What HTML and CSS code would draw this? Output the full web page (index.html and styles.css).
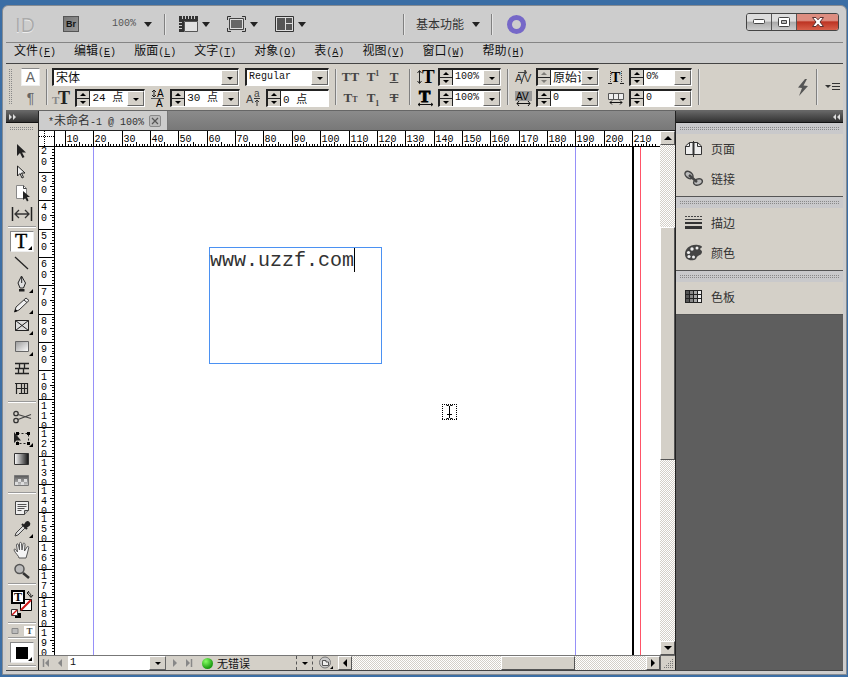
FILE: index.html
```html
<!DOCTYPE html>
<html lang="zh-CN">
<head>
  <meta charset="UTF-8" />
  <meta name="viewport" content="width=device-width, initial-scale=1.0" />
  <title>未命名-1</title>
  <link rel="stylesheet" href="styles.css">
</head>
<body>

<div class="window">

  <header class="titlebar">
    <span class="logo">ID</span>
    <button class="bridge" aria-label="Bridge">Br</button>
    <button class="drop zoom-level latin">100% <i class="caret"></i></button>
    <span class="divider"></span>
    <button class="drop" aria-label="视图选项">
      <svg width="19" height="16" viewBox="0 0 19 16"><path d="M0 0h19v5H5v11H0z" fill="#333"/><path d="M5.500 5.500h13v10h-13z" fill="#e2e2e2" stroke="#555"/><path d="M3.500 0v3M6.500 0v3M9.500 0v3M12.500 0v3M15.500 0v3M0 6.500h3M0 9.500h3M0 12.500h3" stroke="#ccc"/></svg>
      <i class="caret"></i>
    </button>
    <button class="drop" aria-label="屏幕模式">
      <svg width="19" height="16" viewBox="0 0 19 16"><path d="M.5 4V.5H4M15 .5h3.500V4M18.500 12v3.500H15M4 15.500H.5V12" fill="none" stroke="#333"/><path d="M2.500 2.500h14v11h-14z" fill="#ddd" stroke="#444"/><path d="M4 4h11v8H4z" fill="#666"/></svg>
      <i class="caret"></i>
    </button>
    <button class="drop" aria-label="排列文档">
      <svg width="19" height="16" viewBox="0 0 19 16"><path d="M.5.5h18v15H.5z" fill="#ddd" stroke="#333"/><path d="M2 2h8v12H2zM11 2h6v5h-6zM11 8h6v6h-6z" fill="#555"/></svg>
      <i class="caret"></i>
    </button>
    <div class="workspace">
      <span class="divider"></span>
      <button class="drop">基本功能 <i class="caret"></i></button>
      <span class="divider"></span>
      <button class="ring" aria-label="CS Live"></button>
    </div>
    <div class="win-buttons">
      <button aria-label="最小化"><svg width="12" height="6" viewBox="0 0 12 6"><rect x=".5" y=".5" width="11" height="4" rx="1" fill="#fff" stroke="#444"/></svg></button>
      <button aria-label="最大化"><svg width="12" height="10" viewBox="0 0 12 10"><rect x=".5" y=".5" width="11" height="9" rx="1" fill="#fff" stroke="#444"/><path d="M3.500 3.500h5v3h-5z" fill="#bbb" stroke="#444"/></svg></button>
      <button class="close" aria-label="关闭"><svg width="12" height="10" viewBox="0 0 12 10"><path d="M.5.500h3.500L6 2.800 8 .5h3.500L8 5l3.500 4.500H8L6 7.200 4 9.500H.5L4 5z" fill="#fff" stroke="#5a3030"/></svg></button>
    </div>
  </header>

  <nav class="menu">
    <button>文件<span class="latin">(<u>F</u>)</span></button>
    <button>编辑<span class="latin">(<u>E</u>)</span></button>
    <button>版面<span class="latin">(<u>L</u>)</span></button>
    <button>文字<span class="latin">(<u>T</u>)</span></button>
    <button>对象<span class="latin">(<u>O</u>)</span></button>
    <button>表<span class="latin">(<u>A</u>)</span></button>
    <button>视图<span class="latin">(<u>V</u>)</span></button>
    <button>窗口<span class="latin">(<u>W</u>)</span></button>
    <button>帮助<span class="latin">(<u>H</u>)</span></button>
  </nav>

  <section class="control">
    <span class="grip-v"></span>
    <div class="rows modes">
      <button class="on" aria-label="字符格式">A</button>
      <button aria-label="段落格式">¶</button>
    </div>
    <span class="divider"></span>

    <div class="rows type">
      <div class="row names">
        <label class="combo grow cjk"><select aria-label="字体"><option>宋体</option></select></label>
        <label class="combo style"><select aria-label="字体样式"><option>Regular</option></select></label>
      </div>
      <div class="row">
        <svg class="field-icon" width="18" height="16" viewBox="0 0 18 16"><text x="0" y="14" font-size="11" class="serif" fill="#888">T</text><text x="6" y="14" font-size="18" class="serif" fill="#222">T</text></svg>
        <div class="combo size"><span class="spin"><button aria-label="增大"></button><button aria-label="减小"></button></span><select aria-label="字号"><option>24 点</option></select></div>
        <svg class="field-icon" width="14" height="18" viewBox="0 0 14 18"><path d="M3 1v7M1 3l2-2 2 2M1 6l2 2 2-2" fill="none" stroke="#222"/><text x="6" y="8" font-size="10" class="sans">A</text><text x="5" y="18" font-size="10" class="sans">A</text><path d="M0 9.500h13" stroke="#555"/></svg>
        <div class="combo leading"><span class="spin"><button aria-label="增大"></button><button aria-label="减小"></button></span><select aria-label="行距"><option>30 点</option></select></div>
        <svg class="field-icon" width="15" height="16" viewBox="0 0 15 16"><text x="0" y="13" font-size="11" class="sans" fill="#444">A</text><text x="8" y="7" font-size="10" class="sans" fill="#444">a</text><path d="M8 8.500h6M11 16v-5M9 12l2-2 2 2" fill="none" stroke="#333"/></svg>
        <div class="combo plain shift"><span class="spin"><button aria-label="增大"></button><button aria-label="减小"></button></span><input aria-label="基线偏移" value="0 点"></div>
      </div>
    </div>
    <span class="divider"></span>

    <div class="glyphs">
      <button aria-label="全部大写">TT</button>
      <button aria-label="上标">T<sup>1</sup></button>
      <button aria-label="下划线"><u>T</u></button>
      <button aria-label="小型大写">T<small>T</small></button>
      <button aria-label="下标">T<sub>1</sub></button>
      <button aria-label="删除线"><s>T</s></button>
    </div>
    <span class="divider"></span>

    <div class="rows">
      <div class="row">
        <svg class="field-icon" width="18" height="16" viewBox="0 0 18 16"><path d="M2.500 2v12M.5 4l2-2.500 2 2.500M.5 12l2 2.500 2-2.500" fill="none" stroke="#222"/><text x="5" y="14" font-size="19" class="serif">T</text></svg>
        <div class="combo scale"><span class="spin"><button aria-label="增大"></button><button aria-label="减小"></button></span><select aria-label="垂直缩放"><option>100%</option></select></div>
      </div>
      <div class="row">
        <svg class="field-icon" width="18" height="16" viewBox="0 0 18 16"><text x="2" y="12" font-size="17" class="serif" stroke="#000">T</text><path d="M1 14.500h15M3 13l-2 1.500L3 16M14 13l2 1.500-2 1.500" fill="none" stroke="#111"/></svg>
        <div class="combo scale"><span class="spin"><button aria-label="增大"></button><button aria-label="减小"></button></span><select aria-label="水平缩放"><option>100%</option></select></div>
      </div>
    </div>
    <span class="divider"></span>

    <div class="rows">
      <div class="row">
        <svg class="field-icon" width="18" height="16" viewBox="0 0 18 16"><text x="0" y="13" font-size="11" class="sans" fill="#333">A</text><text x="9" y="13" font-size="11" class="sans" fill="#333">V</text><path d="M10.500 1L6 15M3 3.500h8M9 1.500l3 2-3 2" fill="none" stroke="#444"/></svg>
        <div class="combo scale cjk dim"><span class="spin"><button aria-label="增大"></button><button aria-label="减小"></button></span><select aria-label="字偶间距"><option>原始设定</option></select></div>
      </div>
      <div class="row">
        <svg class="field-icon" width="18" height="16" viewBox="0 0 18 16"><path d="M0 1h17v10H0z" fill="#999"/><text x="1" y="10" font-size="10" class="sans">AV</text><path d="M2 13.500h13M4 11l-2 2.500L4 16M13 11l2 2.500-2 2.500" fill="none" stroke="#111"/></svg>
        <div class="combo scale"><span class="spin"><button aria-label="增大"></button><button aria-label="减小"></button></span><select aria-label="字符间距"><option>0</option></select></div>
      </div>
    </div>

    <div class="rows grid-fields">
      <div class="row">
        <svg class="field-icon" width="18" height="16" viewBox="0 0 18 16"><path d="M2.500 2v11M13.500 2v11" stroke="#444" stroke-dasharray="1 1"/><text x="3" y="13" font-size="14" class="serif">T</text><path d="M0 14.500h4M12 14.500h4" stroke="#222"/></svg>
        <div class="combo scale"><span class="spin"><button aria-label="增大"></button><button aria-label="减小"></button></span><select aria-label="比例间距"><option>0%</option></select></div>
      </div>
      <div class="row">
        <svg class="field-icon" width="18" height="16" viewBox="0 0 18 16"><path d="M.5 3.500h15v6H.5zM5.500 3v7M10.500 3v7" fill="#eee" stroke="#555"/><path d="M2 12.500h12M4 10.500l-2 2 2 2M12 10.500l2 2-2 2" fill="none" stroke="#111"/></svg>
        <div class="combo scale"><span class="spin"><button aria-label="增大"></button><button aria-label="减小"></button></span><select aria-label="网格指定格数"><option>0</option></select></div>
      </div>
    </div>
    <span class="divider"></span>

    <div class="control-end">
      <button aria-label="快速应用"><svg width="12" height="17" viewBox="0 0 12 17"><path d="M8 0L1 8.500l4 .5-3 8 9-10-4.500-.5L10 0z" fill="#555"/></svg></button>
      <span class="divider"></span>
      <button aria-label="面板菜单"><svg width="15" height="10" viewBox="0 0 15 10"><path d="M0 3h6L3 6z" fill="#333"/><path d="M7 1.500h8M7 4.500h8M7 7.500h8" stroke="#333"/></svg></button>
    </div>
  </section>

  <main class="work">

    <aside class="tools">
      <div class="dock-head"><svg width="8" height="6" viewBox="0 0 8 6"><path d="M0 0l3 3-3 3zM4 0l3 3-3 3z" fill="#ddd"/></svg></div>
      <span class="grip-h"></span>

      <div class="tool-group">
        <button aria-label="选择"><svg viewBox="0 0 20 20"><path d="M5 3v12l3-3 2.500 5 2-1-2.500-4.500h4z" fill="#222"/></svg></button>
        <button aria-label="直接选择"><svg viewBox="0 0 20 20"><path d="M5.500 4v10l2.500-2.500 2 4.500 1.500-.7-2-4.300H13z" fill="#eee" stroke="#222"/></svg></button>
        <button aria-label="页面"><svg viewBox="0 0 20 20"><path d="M4.500 2.500h7l3 3v10h-10z" fill="#fff" stroke="#888"/><path d="M11.500 2.500v3h3" fill="none" stroke="#444"/><path d="M11 8v9l2.200-2 1.800 3.500 1.500-1L15 14h3z" fill="#222"/></svg></button>
        <button aria-label="间隙"><svg viewBox="0 0 20 20"><path d="M.5 3v14M19.500 3v14" stroke="#222" stroke-width="1.500"/><path d="M3 10h14M7 6l-4 4 4 4M13 6l4 4-4 4" fill="none" stroke="#333" stroke-width="1.300"/></svg></button>
      </div>
      <div class="tool-group">
        <button class="active more" aria-label="文字"><svg viewBox="0 0 20 20"><text x="3" y="16" font-size="20" class="serif light">T</text></svg></button>
        <button aria-label="直线"><svg viewBox="0 0 20 20"><path d="M3 4l13 12" stroke="#222" stroke-width="1.300"/></svg></button>
        <button class="more" aria-label="钢笔"><svg viewBox="0 0 20 20"><path d="M9.500 2L6 9l2 5h3.500l2-5z" fill="#ddd" stroke="#222"/><path d="M9.700 3v6" stroke="#222"/><path d="M7 15h5.500v2.500H7z" fill="#222"/></svg></button>
        <button class="more" aria-label="铅笔"><svg viewBox="0 0 20 20"><path d="M2.500 17l1.500-5L14 3l3 2.500L7 15z" fill="#eee" stroke="#333"/><path d="M2.500 17l1-3 2 2z"/><path d="M12 5l3 2.500" stroke="#333"/></svg></button>
        <button class="more" aria-label="矩形框架"><svg viewBox="0 0 20 20"><path d="M3.500 4.500h13v10h-13zM3.500 4.500l13 10M16.500 4.500l-13 10" fill="#ddd" stroke="#222"/></svg></button>
        <button class="more" aria-label="矩形"><svg viewBox="0 0 20 20"><path d="M3.500 4.500h13v10h-13z" fill="url(#silver)" stroke="#666"/></svg></button>
        <button aria-label="水平网格"><svg viewBox="0 0 20 20"><path d="M3 5.500h14M3 10.500h14M3 15.500h14M7.500 5v5M12.500 5v5M6.500 10v5M11.500 10v5" stroke="#222" stroke-width="1.300"/></svg></button>
        <button aria-label="垂直网格"><svg viewBox="0 0 20 20"><path d="M4.500 4v11M9.500 4v11M15.500 4v11M3 4.500h13M4 9.500h12M7 14.500h9M12.500 4v11" stroke="#222" stroke-width="1.200"/></svg></button>
      </div>
      <div class="tool-group">
        <button aria-label="剪刀"><svg viewBox="0 0 20 20"><circle cx="4" cy="6.500" r="2.200" fill="none" stroke="#333" stroke-width="1.300"/><circle cx="4" cy="13.500" r="2.200" fill="none" stroke="#333" stroke-width="1.300"/><path d="M6 7.500l13 4M6 12.500l13-5" stroke="#444" stroke-width="1.300"/></svg></button>
        <button class="more" aria-label="自由变换"><svg viewBox="0 0 20 20"><path d="M5.500 5.500h11v10h-11z" fill="none" stroke="#222" stroke-dasharray="2 2"/><path d="M4 4h3v3H4zM15 4h3v3h-3zM15 14h3v3h-3zM4 14h3v3H4z"/><path d="M2 4v11l2.500-2.500H9z" fill="#222"/></svg></button>
        <button aria-label="渐变色板"><svg viewBox="0 0 20 20"><path d="M2.500 4.500h14v11h-14z" fill="url(#fade)" stroke="#333"/></svg></button>
        <button aria-label="渐变羽化"><svg viewBox="0 0 20 20"><path d="M2.500 5.500h14v10h-14z" fill="url(#dusk)" stroke="#777"/><path d="M3 12h3v3H3zM9 12h3v3H9zM6 9h3v3H6zM12 9h3v3h-3z" fill="#ddd"/></svg></button>
      </div>
      <div class="tool-group">
        <button aria-label="附注"><svg viewBox="0 0 20 20"><path d="M3.500 3.500h13v9l-4 4h-9z" fill="#eee" stroke="#444"/><path d="M5.500 6.500h9M5.500 8.500h9M5.500 10.500h7M5.500 12.500h4" stroke="#555"/><path d="M16.500 12.500h-4v4" fill="#bbb" stroke="#444"/></svg></button>
        <button class="more" aria-label="吸管"><svg viewBox="0 0 20 20"><path d="M11 7l-7 7-1 3 3-1 7-7" fill="#ddd" stroke="#444"/><path d="M10 5l5 5M12 7l2.500-3.500a1.800 1.800 0 0 1 2.500 2.500L13.500 8.500z" stroke="#222" stroke-width="2" fill="#222"/></svg></button>
        <button aria-label="抓手"><svg viewBox="0 0 20 20"><path d="M7 18c0-2-4-5-5-8 0-1.500 1.500-1 2 0l1.500 2L4.500 5c0-1.500 1.700-1.500 2 0l1 5V3.500c0-1.500 2-1.500 2 0L10 10l1-6c.3-1.500 2-1 2 .5L12.500 11 15 7c1-1.200 2-.3 1.700.8C16 11 15 15 14 18z" fill="#f4f4f4" stroke="#555"/></svg></button>
        <button aria-label="缩放"><svg viewBox="0 0 20 20"><circle cx="7.500" cy="8" r="4.500" fill="#bbb" stroke="#555" stroke-width="1.500"/><path d="M11 12l6 5" stroke="#333" stroke-width="2.500"/></svg></button>
      </div>
      <div class="tool-group">
        <button class="swatch-pair" aria-label="填色与描边"><svg viewBox="0 0 28 32"><path d="M12.500 11.500h11v11h-11z" fill="#fff" stroke="#000"/><path d="M13 22l10-10" stroke="#d01818" stroke-width="2"/><path d="M4 3h12v12H4z" fill="#fff" stroke="#000" stroke-width="2"/><text x="6" y="13" font-size="12" class="serif">T</text><path d="M19 5c3-1 4 1 4 4M21 7l2 2.500L25 7M21 3l-2 2 2 2" fill="none" stroke="#222"/><path d="M7 25h6v5H7z"/><path d="M3.500 21.500h6v6h-6z" fill="#fff" stroke="#333"/><path d="M4 27l5-5" stroke="#d01818" stroke-width="1.500"/></svg></button>
      </div>
      <div class="tool-group apply">
        <button aria-label="应用于容器"><svg viewBox="0 0 10 10"><path d="M1.500 2.500h6v5h-6z" fill="#bbb" stroke="#888"/></svg></button>
        <button class="on" aria-label="应用于文本"><svg viewBox="0 0 10 10"><text x="2" y="8" font-size="9" class="serif" fill="#444">T</text></svg></button>
      </div>
      <div class="tool-group last">
        <button class="active more" aria-label="应用颜色"><svg viewBox="0 0 20 20"><path d="M4 4h12v12H4z"/></svg></button>
      </div>
    </aside>

    <section class="document">
      <div class="tabs">
        <div class="tab">
          <span><span class="latin">*</span>未命名<span class="latin">-1 @ 100%</span></span>
          <button aria-label="关闭文档"><svg width="8" height="8" viewBox="0 0 8 8"><path d="M1 1l6 6M7 1L1 7" stroke="#555" stroke-width="1.200"/></svg></button>
        </div>
      </div>

      <div class="viewer">
        <div class="ruler-corner"></div>
        <div class="ruler ruler-h"><svg id="ruler-h"></svg></div>
        <div class="scroll scroll-v">
          <button aria-label="向上滚动"><i class="arrow up"></i></button>
          <span class="space-a"></span><span class="thumb"></span><span class="space-b"></span>
          <button aria-label="向下滚动"><i class="arrow down"></i></button>
        </div>
        <div class="ruler ruler-v"><svg id="ruler-v"></svg></div>

        <div class="canvas">
          <span class="guide left"></span>
          <span class="guide right"></span>
          <span class="page-edge"></span>
          <span class="bleed"></span>
          <div class="text-frame">www.uzzf.com<span class="text-caret"></span></div>
          <svg class="pointer" width="16" height="17" viewBox="0 0 16 17"><path d="M.5 0v16M14.500 0v16M0 .5h15M0 15.500h15" fill="none" stroke="#000" stroke-dasharray="1 1"/><path d="M4.500 1.500h2l1 1 1-1h2M7.500 2v12M4.500 14.500h2l1-1 1 1h2M5 10.500h5" fill="none" stroke="#000"/></svg>
        </div>

        <div class="status">
          <button aria-label="第一页"><svg width="8" height="8" viewBox="0 0 8 8"><path d="M1.500 0v8" stroke="#888" stroke-width="1.500"/><path d="M7 0v8L3 4z" fill="#888"/></svg></button>
          <button aria-label="上一页"><svg width="8" height="8" viewBox="0 0 8 8"><path d="M6 0v8L2 4z" fill="#888"/></svg></button>
          <label class="combo page"><select aria-label="页码"><option>1</option></select></label>
          <button aria-label="下一页"><svg width="8" height="8" viewBox="0 0 8 8"><path d="M2 0v8l4-4z" fill="#888"/></svg></button>
          <button aria-label="最后一页"><svg width="8" height="8" viewBox="0 0 8 8"><path d="M1 0v8l4-4z" fill="#888"/><path d="M6.500 0v8" stroke="#888" stroke-width="1.500"/></svg></button>
          <div class="preflight"><i class="led"></i>无错误</div>
          <button class="dotted" aria-label="印前检查菜单"><i class="arrow down"></i></button>
          <button class="history" aria-label="打开文件夹"><svg width="16" height="14" viewBox="0 0 16 14"><circle cx="7" cy="6.500" r="5.500" fill="#ccc" stroke="#777"/><path d="M4.500 4.500v5h6V6H8V4.500z" fill="#eee" stroke="#555"/><path d="M12 13h3v-3z"/></svg></button>
          <div class="scroll scroll-h">
            <button aria-label="向左滚动"><i class="arrow prev"></i></button>
            <span class="space-a"></span><span class="thumb"></span><span class="space-b"></span>
            <button aria-label="向右滚动"><i class="arrow next"></i></button>
          </div>
        </div>
        <div class="size-grip"><svg width="14" height="14" viewBox="0 0 14 14"><path d="M3 11.500h9M5 9.500h7M7 7.500h5M9 5.500h3M11 3.500h1" stroke="#777" stroke-dasharray="1 1"/></svg></div>
      </div>
    </section>

    <aside class="panels">
      <div class="dock-head"><svg width="8" height="6" viewBox="0 0 8 6"><path d="M4 0L1 3l3 3zM8 0L5 3l3 3z" fill="#ddd"/></svg></div>
      <div class="panel-group">
        <span class="panel-grip"></span>
        <button><svg width="20" height="20" viewBox="0 0 20 20"><path d="M1.500 7l4-3.500H9v12H1.500zM17.500 7l-4-3.500H10v12h7.500z" fill="#eee" stroke="#333"/><path d="M1.500 7.500h4v-4M17.500 7.500h-4v-4" fill="none" stroke="#333"/><path d="M9.500 2v16" stroke="#333"/></svg>页面</button>
        <button><svg width="20" height="20" viewBox="0 0 20 20"><g fill="#bbb" stroke="#444" stroke-width="1.500"><ellipse cx="5" cy="6" rx="4.500" ry="3" transform="rotate(38 5 6)"/><ellipse cx="14" cy="13" rx="4.500" ry="3" transform="rotate(-18 14 13)"/><path d="M5 6l8 7" stroke-width="2.500"/></g></svg>链接</button>
      </div>
      <div class="panel-group">
        <span class="panel-grip"></span>
        <button><svg width="20" height="20" viewBox="0 0 20 20"><path d="M1 3.500h17" stroke="#444" stroke-dasharray="2 1"/><path d="M1 6.500h17" stroke="#444"/><path d="M1 10h17" stroke="#333" stroke-width="2"/><path d="M1 14.500h17" stroke="#333" stroke-width="3"/></svg>描边</button>
        <button><svg width="20" height="20" viewBox="0 0 20 20"><path d="M14 2C6 1 1 6 1 11s4 7 9 6c3-.5 2-3 4-4s4-2 4-4-2-2-2-3 2-1 2-2-2-2-4-2z" fill="#444"/><g fill="#eee"><circle cx="8" cy="6" r="1.700"/><circle cx="4.500" cy="9.500" r="1.600"/><circle cx="5" cy="13.500" r="1.600"/><circle cx="9.500" cy="14" r="1.500"/><circle cx="13" cy="5" r="1.500"/></g></svg>颜色</button>
      </div>
      <div class="panel-group">
        <span class="panel-grip"></span>
        <button><svg width="20" height="20" viewBox="0 0 20 20"><path d="M1 3h17v13H1z" fill="#222"/><path d="M2 4h3v3H2zM2 8h3v3H2zM2 12h3v3H2z" fill="#555"/><path d="M6 4h3v3H6zM6 8h3v3H6zM6 12h3v3H6z" fill="#888"/><path d="M10 4h3v3h-3zM10 8h3v3h-3zM10 12h3v3h-3z" fill="#aaa"/><path d="M14 4h3v3h-3zM14 8h3v3h-3zM14 12h3v3h-3z" fill="#eee"/></svg>色板</button>
      </div>
    </aside>
  </main>
</div>

<svg class="defs" width="0" height="0">
  <defs>
    <linearGradient id="silver" x2="1" y2="1"><stop stop-color="#999"/><stop offset="1" stop-color="#fff"/></linearGradient>
    <linearGradient id="fade"><stop stop-color="#fff"/><stop offset="1" stop-color="#111"/></linearGradient>
    <linearGradient id="dusk" x2="0" y2="1"><stop stop-color="#555"/><stop offset="1" stop-color="#ccc"/></linearGradient>
  </defs>
</svg>

<script src="script.js"></script>
</body>
</html>
```
FILE: styles.css
```css
* {
  box-sizing: border-box;
}

body {
  margin: 0;
  height: 100vh;
  padding: 5px 1px 2px 2px;
  background: #3b6ea5;
  font-family: "Noto Sans CJK SC", sans-serif;
  font-size: 12px;
  line-height: 16px;
  color: #111;
}

button, select, input {
  font: inherit;
  color: inherit;
  margin: 0;
  padding: 0;
  border: 0;
  border-radius: 0;
  background: none;
}

button {
  display: flex;
  align-items: center;
  justify-content: center;
}

svg {
  display: block;
  flex: none;
  overflow: visible;
}

.defs {
  position: absolute;
}

.latin {
  font-family: "Liberation Mono", monospace;
  font-size: 10px;
}

.serif {
  font-family: "Liberation Serif", serif;
  font-weight: bold;
}

.serif.light {
  font-weight: normal;
  stroke: #000;
  stroke-width: 0.4;
}

.sans {
  font-family: "Liberation Sans", sans-serif;
}

.window {
  height: 100%;
  display: flex;
  flex-direction: column;
  padding: 0 3px 3px;
  border: 1px solid #858b92;
  border-radius: 6px 6px 0 0;
  background: #cdcdcd;
}

/* title bar */
.titlebar {
  height: 37px;
  display: flex;
  align-items: center;
  padding: 0 4px 0 9px;
  border-bottom: 1px solid #858585;
}

.logo {
  width: 48px;
  font: 20px "Open Sans", sans-serif;
  color: #aaa;
  text-shadow: 0 1px 0 #eee;
}

.bridge {
  width: 16px;
  height: 16px;
  margin-right: 33px;
  border: 1px solid #555;
  background: linear-gradient(135deg, #777, #999);
  font: bold 9px "Liberation Sans", sans-serif;
}

.drop {
  gap: 4px;
  margin-right: 17px;
}

.zoom-level {
  gap: 8px;
  color: #555;
  margin-right: 12px;
}

.caret {
  border: 4px solid transparent;
  border-top: 5px solid #222;
  border-bottom: 0;
}

.divider {
  align-self: center;
  width: 2px;
  height: 21px;
  border-left: 1px solid #808080;
  border-right: 1px solid #e4e4e4;
}

.titlebar > .divider {
  margin-right: 13px;
}

.workspace {
  display: flex;
  align-items: center;
  gap: 11px;
  margin-left: auto;
  margin-right: 220px;
  color: #333;
}

.workspace .drop {
  gap: 8px;
  margin: 0;
}

.ring {
  width: 19px;
  height: 19px;
  margin-left: 3px;
  border: 5px solid #7668c8;
  border-radius: 50%;
}

.win-buttons {
  display: flex;
  margin-top: -4px;
  border: 1px solid #444;
  border-radius: 3px;
  overflow: hidden;
}

.win-buttons button {
  width: 25px;
  height: 16px;
  border-right: 1px solid #555;
  background: linear-gradient(#ddd 0 45%, #aaa 50%, #ccc);
}

.win-buttons .close {
  width: 41px;
  border: 0;
  background: linear-gradient(#dd8d80 0 40%, #bd3423 50%, #d8604a);
}

/* menu */
.menu {
  height: 20px;
  display: flex;
  align-items: center;
  gap: 18px;
  padding: 0 8px 4px;
}

.menu button {
  align-items: baseline;
  white-space: nowrap;
}

/* control panel */
.control {
  height: 48px;
  display: flex;
  align-items: center;
  gap: 6px;
  padding: 0 3px;
  border-top: 1px solid #444;
  border-bottom: 1px solid #666;
  background: #d4d0c8;
  font-family: "Liberation Mono", "Noto Sans CJK SC", monospace;
  font-size: 10px;
}

.control > .divider,
.control-end .divider {
  height: 36px;
}

/* dotted drag handles, one dot every second pixel */
.grip-v,
.grip-h,
.panel-grip {
  background: conic-gradient(from 270deg, #888 25%, transparent 0) 0 0 / 2px 2px;
}

.grip-v {
  width: 4px;
  height: 36px;
}

.rows {
  display: flex;
  flex-direction: column;
  gap: 3px;
}

.row {
  display: flex;
  align-items: center;
  gap: 3px;
}

.modes {
  margin-left: 2px;
}

.modes button {
  width: 19px;
  height: 18px;
  font: 14px "Liberation Sans", sans-serif;
  color: #666;
}

.modes .on {
  background: #fff;
  border: 1px solid #eee;
  border-top-color: #888;
}

.type {
  width: 277px;
  margin-left: -2px;
}

.type .row {
  justify-content: space-between;
}

.type .names {
  gap: 6px;
}

.combo {
  display: flex;
  height: 18px;
  position: relative;
  border: 1px solid #fff;
  border-top: 2px solid #222;
  border-left: 2px solid #222;
  background: #fff;
}

.combo select,
.combo input {
  appearance: none;
  flex: 1;
  width: 0;
  height: 100%;
  min-width: 0;
  padding-left: 2px;
  outline: 0;
  line-height: 14px;
}

.combo select {
  padding-right: 16px;
}

/* drop-down button drawn over the select's right end */
.combo:not(.plain)::before {
  content: "";
  position: absolute;
  right: 0;
  top: 0;
  bottom: 0;
  width: 15px;
  border: 1px solid #fff;
  border-right-color: #666;
  border-bottom-color: #666;
  background: #d4d0c8;
  pointer-events: none;
}

.combo:not(.plain)::after {
  content: "";
  position: absolute;
  right: 5px;
  top: 7px;
  border: 3px solid transparent;
  border-top-color: #000;
  border-bottom: 0;
  pointer-events: none;
}

.combo.cjk {
  font: 12px/14px "Noto Sans CJK SC", sans-serif;
}

.combo.cjk select {
  padding-bottom: 2px;
}

.grow { flex: 1; }
.style { width: 84px; }
.size { width: 70px; font-size: 11px; }
.leading { width: 70px; font-size: 11px; }
.shift { width: 63px; font-size: 11px; }
.scale { width: 63px; }

.spin {
  width: 13px;
  display: flex;
  flex-direction: column;
  border-right: 1px solid #222;
}

.spin button {
  flex: 1;
  background: #d4d0c8;
  border-bottom: 1px solid #222;
}

.spin button + button {
  border-bottom: 0;
}

.spin button::before {
  content: "";
  border: 3px solid transparent;
  border-bottom-color: #000;
  border-top: 0;
}

.spin button + button::before {
  border-top: 3px solid #000;
  border-bottom: 0;
}

.dim .spin button::before {
  opacity: 0.4;
}

.glyphs {
  display: grid;
  grid-template-columns: 15px 30px 12px;
  grid-auto-rows: 21px;
  justify-items: center;
  margin-right: 3px;
  font: bold 13px/21px "Liberation Serif", serif;
  color: #444;
}

.glyphs button {
  display: block;
  white-space: nowrap;
}

.glyphs sup,
.glyphs sub,
.glyphs small {
  font-size: 8px;
  line-height: 0;
}

.grid-fields {
  margin-left: 3px;
}

.control-end {
  display: flex;
  align-items: center;
  gap: 7px;
  margin-left: auto;
}

/* work area */
.work {
  flex: 1;
  min-height: 0;
  display: flex;
  border-bottom: 1px solid #444;
}

.dock-head {
  height: 12px;
  display: flex;
  align-items: center;
  padding: 0 3px;
  background: linear-gradient(#666, #333);
  border-bottom: 1px solid #111;
}

.tools {
  width: 33px;
  overflow: hidden;
  border-right: 1px solid #222;
  background: #d4d0c8;
}

.grip-h {
  display: block;
  height: 4px;
  margin: 4px 4px 9px;
}

.tool-group {
  display: flex;
  flex-direction: column;
  align-items: center;
  padding-bottom: 3px;
  margin: 0 2px 2px;
  border-bottom: 1px solid #fff;
  box-shadow: inset 0 -1px #999;
}

.tool-group + .tool-group {
  padding-top: 1px;
}

.tool-group button {
  position: relative;
  width: 24px;
  height: 21px;
}

.tool-group svg {
  width: 20px;
  height: 20px;
}

.tool-group .active {
  background: #fff;
  border: 1px solid #eee;
  border-top-color: #888;
  border-left-color: #888;
}

/* corner mark for tools with hidden variants */
.more::after {
  content: "";
  position: absolute;
  right: 1px;
  bottom: 1px;
  border: 2px solid #000;
  border-top-color: transparent;
  border-left-color: transparent;
}

.tool-group .swatch-pair,
.swatch-pair svg {
  width: 28px;
  height: 32px;
}

.tool-group.apply {
  flex-direction: row;
  justify-content: center;
  gap: 3px;
  padding: 0 0 2px;
}

.tool-group.apply button,
.tool-group.apply svg {
  width: 11px;
  height: 10px;
}

.apply .on {
  background: #fff;
}

.document {
  flex: 1;
  min-width: 0;
  display: flex;
  flex-direction: column;
}

.tabs {
  height: 20px;
  display: flex;
  background: linear-gradient(#8b8b8b, #787878);
  border-bottom: 1px solid #222;
}

.tab {
  width: 129px;
  display: flex;
  align-items: center;
  justify-content: space-between;
  padding: 1px 6px 0 9px;
  background: #cdcdcd;
  border-right: 1px solid #777;
  color: #333;
  white-space: nowrap;
}

.tab button {
  width: 12px;
  height: 12px;
  border: 1px solid #888;
  border-radius: 2px;
  background: #bbb;
}

.viewer {
  flex: 1;
  min-height: 0;
  display: grid;
  grid-template-columns: 16px 1fr 15px;
  grid-template-rows: 16px 1fr 15px;
}

.ruler-corner {
  border-right: 1px solid #000;
  border-bottom: 1px solid #000;
  background:
    repeating-linear-gradient(90deg, #000 0 1px, transparent 1px 2px) 0 5px / 100% 1px no-repeat,
    repeating-linear-gradient(#000 0 1px, transparent 1px 2px) 5px 0 / 1px 100% no-repeat,
    #fff;
}

.ruler {
  min-width: 0;
  min-height: 0;
  overflow: hidden;
  background: #fff;
  font-family: "Liberation Mono", monospace;
  font-size: 10px;
}

.ruler svg {
  width: 100%;
  height: 100%;
}

.ruler-h { border-bottom: 1px solid #000; }
.ruler-v { border-right: 1px solid #000; }

.canvas {
  position: relative;
  min-height: 0;
  overflow: hidden;
  background: #fff;
}

.guide,
.page-edge,
.bleed,
.text-frame,
.pointer {
  position: absolute;
}

.guide,
.page-edge,
.bleed {
  top: 0;
  bottom: 0;
  width: 1px;
}

.guide { background: #9690f8; }
.guide.left { left: 38px; }
.guide.right { left: 520px; }

.page-edge {
  left: 577px;
  width: 2px;
  background: #000;
}

.bleed {
  left: 585px;
  background: #ff5468;
}

.text-frame {
  left: 154px;
  top: 100px;
  width: 173px;
  height: 117px;
  display: flex;
  align-items: flex-start;
  border: 1px solid #4b91f2;
  font: 20px/26px "Liberation Mono", monospace;
  color: #333;
}

.text-caret {
  width: 1px;
  height: 24px;
  background: #000;
}

.pointer {
  left: 387px;
  top: 257px;
}

/* scrollbars */
.scroll {
  display: flex;
  background: repeating-conic-gradient(#fff 0 25%, #d4d0c8 0 50%) 0 0 / 2px 2px;
}

.scroll button,
.thumb {
  background: #d4d0c8;
  border: 1px solid #fff;
  border-right-color: #555;
  border-bottom-color: #555;
}

.scroll button {
  flex: none;
  width: 14px;
  height: 14px;
}

.scroll-v {
  grid-row: 1 / 3;
  grid-column: 3;
  flex-direction: column;
}

.scroll-v button {
  width: 15px;
}

.scroll-v .space-a { flex: 82; }
.scroll-v .thumb { flex: 232; }
.scroll-v .space-b { flex: 181; }

.scroll-h {
  flex: 1;
}

.scroll-h .space-a { flex: 150; }
.scroll-h .thumb { flex: 73; }
.scroll-h .space-b { flex: 71; }

.arrow {
  border: 4px solid transparent;
}

.arrow.up { border-bottom-color: #000; border-top: 0; }
.arrow.down { border-top-color: #000; border-bottom: 0; }
.arrow.prev { border-right-color: #000; border-left: 0; }
.arrow.next { border-left-color: #000; border-right: 0; }

.status {
  grid-column: 1 / 3;
  display: flex;
  border-top: 1px solid #777;
  background: #d4d0c8;
}

.status > button {
  width: 14px;
}

.combo.page {
  width: 98px;
  height: 14px;
  margin: 0 2px 0 1px;
  border-width: 0;
  font: 10px "Liberation Mono", monospace;
}

.combo.page::after {
  top: 6px;
}

.preflight {
  width: 100px;
  display: flex;
  align-items: center;
  gap: 4px;
  padding-left: 6px;
  font-size: 11px;
  line-height: 14px;
}

.led {
  width: 11px;
  height: 11px;
  border-radius: 50%;
  background: radial-gradient(circle at 35% 30%, #8f6, #1a9a10 70%);
}

.status .dotted {
  width: 17px;
  border-left: 1px dashed #555;
  border-right: 1px dashed #555;
}

.dotted .arrow {
  border-width: 3px;
  border-bottom-width: 0;
}

.status .history {
  width: 25px;
}

.size-grip {
  border-left: 1px solid #666;
  border-top: 1px solid #666;
  background: #d4d0c8;
}

/* right dock */
.panels {
  width: 168px;
  border-left: 1px solid #222;
  background: #5e5e5e;
}

.panels .dock-head {
  justify-content: flex-end;
}

.panel-group {
  padding-bottom: 2px;
  border-bottom: 1px solid #555;
  background: #d4d0c8;
}

.panel-grip {
  display: block;
  height: 11px;
  border: solid #c9c9cb;
  border-width: 4px 4px 3px;
  background-color: #c9c9cb;
}

.panel-group button {
  width: 100%;
  height: 30px;
  justify-content: flex-start;
  gap: 7px;
  padding-left: 8px;
  color: #333;
}
```
FILE: script.js
```js
const SVG = 'http://www.w3.org/2000/svg';
const STEP = 2.835; // pixels per millimetre at 100%

function addLine(svg, x1, y1, x2, y2) {
  const line = document.createElementNS(SVG, 'path');
  line.setAttribute('d', `M${x1} ${y1}L${x2} ${y2}`);
  line.setAttribute('stroke', '#000');
  svg.appendChild(line);
}

function addText(svg, x, y, value) {
  const text = document.createElementNS(SVG, 'text');
  text.setAttribute('x', x);
  text.setAttribute('y', y);
  text.textContent = value;
  svg.appendChild(text);
}

function tickLength(mm) {
  if (mm % 10 === 0) return 15;
  return mm % 5 === 0 ? 4 : 2;
}

function drawHorizontal(svg) {
  for (let mm = 7; mm < 219; mm++) {
    const x = Math.round(10 + (mm - 10) * STEP) + 0.5;
    addLine(svg, x, 15 - tickLength(mm), x, 15);
    if (mm % 10 === 0) addText(svg, x + 1, 11, mm);
  }
}

function drawVertical(svg) {
  for (let mm = 22; mm < 200; mm++) {
    const y = Math.round(25 + (mm - 30) * STEP) + 0.5;
    addLine(svg, 15 - tickLength(mm), y, 15, y);
  }
  for (let mm = 20; mm < 200; mm += 10) {
    const y = Math.round(25 + (mm - 30) * STEP);
    const gap = mm < 100 ? 11 : 10;
    String(mm).split('').forEach((digit, i) => addText(svg, 2, y + 10 + i * gap, digit));
  }
}

drawHorizontal(document.getElementById('ruler-h'));
drawVertical(document.getElementById('ruler-v'));
```
